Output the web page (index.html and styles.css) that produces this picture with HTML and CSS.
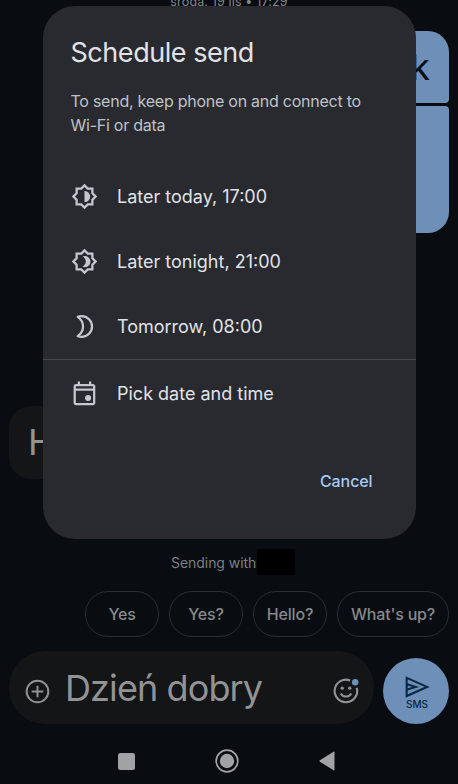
FILE: index.html
```html
<!DOCTYPE html>
<html lang="en">
<head>
<meta charset="utf-8">
<title>Schedule send</title>
<link rel="stylesheet" href="styles.css">
</head>
<body>
<div class="screen">
  <main class="chat">
    <div class="date"><span>środa, 19 lis • 17:29</span></div>
    <div class="bubble out first"><span>k</span></div>
    <div class="bubble out last"></div>
    <div class="bubble in"><span>H</span></div>
  </main>
  <div class="sending"><span class="t-sending">Sending with</span><span class="redacted"></span></div>
  <div class="chips">
    <button class="chip">Yes</button>
    <button class="chip">Yes?</button>
    <button class="chip">Hello?</button>
    <button class="chip wide">What's up?</button>
  </div>
  <div class="composer">
    <div class="field">
      <svg class="plus" viewBox="0 0 24 24"><circle cx="12" cy="12" r="10.4"/><path d="M12 6.4v11.2M6.4 12h11.2"/></svg>
      <span class="draft">Dzień dobry</span>
      <svg class="emoji" viewBox="0 0 24 24"><path d="M15.8 2.3A10.4 10.4 0 1 0 21.9 9M7.2 14.2c2 3.8 7.600 3.800 9.600 0"/><circle class="dot" cx="8.5" cy="9.4" r="1.5"/><circle class="dot" cx="15.5" cy="9.4" r="1.5"/><circle class="badge" cx="20.5" cy="4" r="3"/></svg>
    </div>
    <button class="send">
      <svg viewBox="0 0 24 21"><path d="M1.6 1.7 21.2 10.4 1.6 19.2zM2 7.8l8.4 2.6L2 13"/></svg>
      <span>SMS</span>
    </button>
  </div>
  <nav class="nav">
    <svg viewBox="0 0 17 17"><rect width="17" height="17" rx="2.5"/></svg>
    <svg class="home" viewBox="0 0 24 24"><circle class="ring" cx="12" cy="12" r="10.8"/><circle cx="12" cy="12" r="7.2"/></svg>
    <svg class="back" viewBox="0 0 16 20"><path d="M15.5 1.2v17.6q0 1-1 .5L.9 10.7q-.9-.7 0-1.4L14.5.7q1-.5 1 .5z"/></svg>
  </nav>

  <section class="dialog">
    <h1>Schedule send</h1>
    <p>To send, keep phone on and connect to<br>Wi-Fi or data</p>
    <ul>
      <li><svg viewBox="0 0 24 24"><path d="M20 8.69V4h-4.69L12 .69 8.69 4H4v4.69L.69 12 4 15.31V20h4.69L12 23.31 15.31 20H20v-4.69L23.31 12 20 8.69zm-2 5.79V18h-3.52L12 20.48 9.52 18H6v-3.52L3.52 12 6 9.52V6h3.52L12 3.52 14.48 6H18v3.52L20.48 12 18 14.48z"/><path d="M12 7v10c2.76 0 5-2.24 5-5s-2.24-5-5-5z"/></svg><span>Later today, 17:00</span></li>
      <li><svg viewBox="0 0 24 24"><path d="M20 8.69V4h-4.69L12 .69 8.69 4H4v4.69L.69 12 4 15.31V20h4.69L12 23.31 15.31 20H20v-4.69L23.31 12 20 8.69zm-2 5.79V18h-3.52L12 20.48 9.52 18H6v-3.52L3.52 12 6 9.52V6h3.52L12 3.52 14.48 6H18v3.52L20.48 12 18 14.48z"/><path d="M12.29 17c2.76 0 5-2.24 5-5s-2.24-5-5-5c-.74 0-1.45.17-2.08.46 1.72.79 2.92 2.53 2.92 4.54s-1.2 3.75-2.92 4.54c.63.29 1.34.46 2.08.46z"/></svg><span>Later tonight, 21:00</span></li>
      <li><svg viewBox="0 0 24 24"><path class="line" d="M6 3.4C7 3 8 2.8 9.5 2.8a9.2 9.2 0 0 1 0 18.4c-1.5 0-2.5-.2-3.5-.6Q10.7 17.3 10.7 12T6 3.4z"/></svg><span>Tomorrow, 08:00</span></li>
      <li class="pick"><svg viewBox="0 0 24 24"><path d="M19.500 3.500H18V1.300h-2v2.200H8V1.300H6v2.200H4.500c-1.300 0-2.200.9-2.200 2v15c0 1.100.9 2 2.200 2h15c1.200 0 2.100-.9 2.100-2v-15c0-1.100-.9-2-2.100-2zm.1 17H4.300V9.500h15.300zm0-13H4.300v-2h15.300z"/><circle cx="15.200" cy="16" r="2.700"/></svg><span>Pick date and time</span></li>
    </ul>
    <button class="cancel">Cancel</button>
  </section>
</div>
</body>
</html>
```
FILE: styles.css
```css
* { box-sizing: border-box; }
body { margin: 0; background: #090d11; font-family: Inter, Roboto, sans-serif; }
button { font: inherit; background: none; border: 0; padding: 0; margin: 0; }
.screen { position: relative; width: 458px; height: 784px; overflow: hidden; display: flex; flex-direction: column; white-space: nowrap; }
.chat { height: 549px; display: flex; flex-direction: column; overflow: hidden; }
.date { margin-top: -8px; height: 20px; line-height: 20px; font-size: 12.5px; text-align: center; color: #85888b; letter-spacing: .15px; }
.bubble { font-size: 36px; line-height: 73px; }
.out { align-self: flex-end; margin-right: 9px; width: 120px; background: #6e8fb7; color: #080d16; text-align: right; }
.first { margin-top: 19px; height: 72px; padding-right: 19px; border-radius: 21px 21px 4px 21px; }
.last { margin-top: 3px; height: 127px; border-radius: 21px 4px 21px 21px; }
.in { margin: 173px 0 0 9px; width: 120px; height: 73px; padding-left: 19px; border-radius: 22px; background: #141517; color: #929395; }
.sending { height: 26px; display: flex; align-items: center; padding-left: 171px; font-size: 14px; color: #7b7e82; }
.t-sending { width: 86px; letter-spacing: -.05px; }
.redacted { width: 38px; height: 26px; background: #000; }
.chips { display: flex; gap: 10px; margin: 16px 0 0 85px; }
.chip { width: 74px; height: 46px; border: 1px solid #2b2d30; border-radius: 23px; color: #86888b; font-size: 16px; font-weight: 500; letter-spacing: -.2px; }
.wide { width: 112px; }
.composer { display: flex; gap: 9px; margin: 14px 9px 0; height: 73px; align-items: flex-start; }
.field { width: 365px; height: 73px; border-radius: 36px; background: #141517; display: flex; align-items: center; }
.plus { width: 25px; height: 25px; margin: 7px 0 0 16px; fill: none; stroke: #919294; stroke-width: 1.9; }
.draft { width: 250px; margin-left: 15px; font-size: 36px; color: #929395; letter-spacing: -.9px; }
.emoji { width: 26px; height: 26px; margin: 7px 0 0 18px; overflow: visible; fill: none; stroke: #919294; stroke-width: 2; }
.emoji .dot { fill: #919294; stroke: none; }
.emoji .badge { fill: #6e8fb7; stroke: none; }
.send { width: 66px; height: 66px; margin-top: 7px; border-radius: 50%; background: #6e8fb7; color: #0b2743; display: flex; flex-direction: column; align-items: center; padding: 18px 0 0 2px; }
.send svg { width: 25px; height: 22px; fill: none; stroke: #0b2743; stroke-width: 2; }
.send span { font-size: 10px; line-height: 12px; font-weight: 500; letter-spacing: 0; }
.nav { display: flex; align-items: center; height: 24px; margin: 25px 0 0 118px; fill: #a0a2a3; }
.nav svg { width: 17px; height: 17px; }
.nav .home { width: 24px; height: 24px; margin-left: 80px; }
.ring { fill: none; stroke: #a0a2a3; stroke-width: 1.7; }
.nav .back { width: 16px; height: 20px; margin-left: 80px; }
.dialog { position: absolute; left: 42.5px; top: 5.5px; width: 373px; height: 533px; border-radius: 32px; background: #282a2f; color: #e1e2e8; display: flex; flex-direction: column; }
h1 { margin: 30px 0 0 28px; font-size: 27px; line-height: 34px; font-weight: 400; letter-spacing: -.45px; }
p { margin: 19px 0 0 28px; font-size: 16px; line-height: 24px; letter-spacing: -.25px; color: #bfc1c9; }
ul { list-style: none; margin: 27px 0 0; padding: 0; }
li { display: flex; align-items: center; gap: 19px; height: 65.3px; padding-left: 28.5px; font-size: 18px; }
li svg { width: 27px; height: 27px; fill: #c6c8d0; }
li .line { fill: none; stroke: #c6c8d0; stroke-width: 2; stroke-linejoin: round; }
.pick { height: 68px; border-top: 1px solid #45484d; }
.cancel { align-self: flex-end; margin: 43px 43px 0 0; font-size: 16px; line-height: 22px; font-weight: 500; letter-spacing: -.1px; color: #a4c9f7; }
```
